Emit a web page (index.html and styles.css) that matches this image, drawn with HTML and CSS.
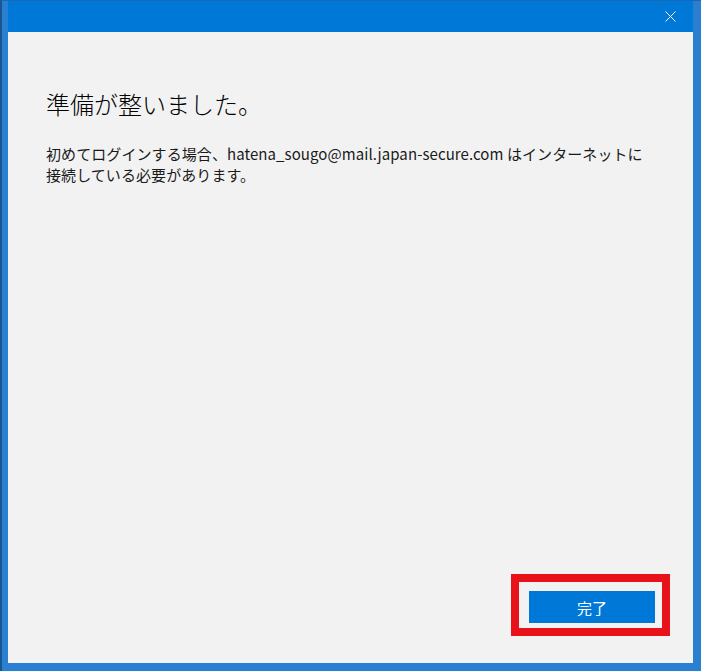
FILE: index.html
```html
<!DOCTYPE html>
<html lang="ja">
<head>
<meta charset="utf-8">
<link rel="stylesheet" href="styles.css">
</head>
<body>
<div class="window">
  <div class="titlebar">
    <button class="close" aria-label="閉じる">
      <svg width="11" height="11" viewBox="0 0 11 11"><path d="M0.5 0.5 L10.5 10.5 M10.5 0.5 L0.5 10.5" stroke="#ffffff" stroke-width="1" fill="none"/></svg>
    </button>
  </div>
  <div class="content">
    <h1 class="heading">準備が整いました。</h1>
    <p class="message">初めてログインする場合、hatena_sougo@mail.japan-secure.com はインターネットに<br>接続している必要があります。</p>
    <div class="footer">
      <div class="highlight">
        <button class="primary">完了</button>
      </div>
    </div>
  </div>
</div>
</body>
</html>
```
FILE: styles.css
```css
html, body {
  margin: 0;
  padding: 0;
}
body {
  width: 701px;
  height: 671px;
  overflow: hidden;
  font-family: "Noto Sans CJK JP", "Noto Sans", sans-serif;
}
.window {
  box-sizing: border-box;
  width: 701px;
  height: 671px;
  background: #2a7fd0;
  border-left: 2px solid #18568f;
  border-top: 1px solid #1a68b4;
  padding: 0 8px 8px 6px;
  display: flex;
  flex-direction: column;
}
.titlebar {
  height: 31px;
  background: #0078d7;
  display: flex;
  justify-content: flex-end;
  align-items: center;
  flex-shrink: 0;
}
.close {
  width: 46px;
  height: 31px;
  border: 0;
  background: transparent;
  padding: 0;
  display: flex;
  align-items: center;
  justify-content: center;
}
.content {
  flex: 1;
  background: #f2f2f2;
  display: flex;
  flex-direction: column;
  padding: 0 0 0 38px;
}
.heading {
  margin: 56px 0 0 0;
  font-size: 24px;
  font-weight: 300;
  line-height: 32px;
  color: #000000;
}
.message {
  margin: 23px 0 0 0;
  font-size: 15px;
  font-weight: 400;
  letter-spacing: 0.08px;
  line-height: 21px;
  color: #1a1a1a;
}
.footer {
  margin-top: auto;
  display: flex;
  justify-content: flex-end;
  padding: 0 23px 27px 0;
}
.highlight {
  border: 8px solid #e8121b;
  padding: 9px 7px 5px 10px;
  background: #f2f2f2;
}
.primary {
  display: block;
  width: 126px;
  height: 32px;
  border: 0;
  background: #0078d7;
  color: #ffffff;
  font-family: "Noto Sans CJK JP", sans-serif;
  font-size: 15px;
  font-weight: 400;
  padding: 0;
}
```
